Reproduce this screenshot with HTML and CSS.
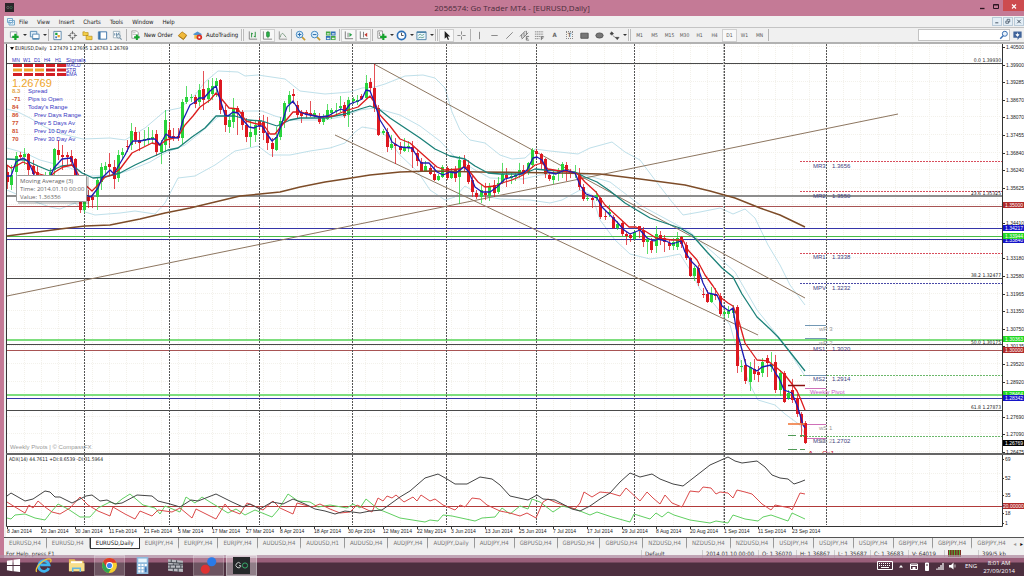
FILE: index.html
```html
<!DOCTYPE html>
<html lang="en">
<head>
<meta charset="utf-8">
<title>2056574: Go Trader MT4 - [EURUSD,Daily]</title>
<link rel="stylesheet" href="styles.css">
</head>
<body>
<header class="titlebar">
  <svg class="app-icon" viewBox="0 0 10 10" aria-hidden="true"><rect width="10" height="10" fill="#2b2529"/><circle cx="3.2" cy="5" r="1.3" fill="none" stroke="#777" stroke-width=".7"/><circle cx="6.8" cy="5" r="1.3" fill="none" stroke="#3c7a55" stroke-width=".7"/></svg>
  <h1 class="title">2056574: Go Trader MT4 - [EURUSD,Daily]</h1>
  <div class="win-controls">
    <button class="win-btn" aria-label="Minimize"><svg viewBox="0 0 10 10"><path d="M3 7.5h4.500" stroke="#2c1622" stroke-width="1.300"/></svg></button>
    <button class="win-btn" aria-label="Maximize"><svg viewBox="0 0 10 10"><path d="M2.500 3.500h5v4h-5zM2.500 4h5" fill="none" stroke="#2c1622"/></svg></button>
    <button class="win-btn win-close" aria-label="Close"><svg viewBox="0 0 10 10"><path d="M3 3.500l4 4M7 3.500l-4 4" stroke="#fff" stroke-width="1.100"/></svg></button>
  </div>
</header>

<main class="app">
  <nav class="menubar" aria-label="Menu">
    <svg class="menu-logo" viewBox="0 0 10 10" aria-hidden="true"><path d="M1.500 1.500h5v4h-5zM3 3.500h5.500v4.500h-5.500z" fill="#eef6fb" stroke="#6aa2c8" stroke-width=".9"/><path d="M4 7l1.200-1.500 1 1L8 4.800" fill="none" stroke="#6aa2c8" stroke-width=".7"/></svg>
    <button>File</button><button>View</button><button>Insert</button><button>Charts</button><button>Tools</button><button>Window</button><button>Help</button>
    <div class="child-controls">
      <button aria-label="Minimize chart"><svg viewBox="0 0 8 8"><path d="M2 5.500h3.500" stroke="#345"/></svg></button>
      <button aria-label="Restore chart"><svg viewBox="0 0 8 8"><path d="M1.500 3.500h3v2.500h-3zM3 3V1.500h3V4.500h-1.200" fill="none" stroke="#345" stroke-width=".8"/></svg></button>
      <button aria-label="Close chart"><svg viewBox="0 0 8 8"><path d="M2 2l4 4M6 2l-4 4" stroke="#345"/></svg></button>
    </div>
  </nav>

  <div class="toolbar" role="toolbar" aria-label="Tools">
    <button class="tool drop" aria-label="New chart"><svg viewBox="0 0 12 12"><path d="M1.500 2h7v6h-7z" fill="#fff" stroke="#78899a" stroke-width=".8"/><path d="M7 4v7M3.500 7.500h7" stroke="#14a32c" stroke-width="2.500"/></svg></button>
    <button class="tool drop" aria-label="Profiles"><svg viewBox="0 0 12 12"><path d="M1.500 1.500h7v6h-7z" fill="#dcecf7" stroke="#5789b2"/><path d="M4 4.500h7V10h-7z" fill="#fff" stroke="#5789b2"/><path d="M4 9.500h7" stroke="#5789b2" stroke-width="1.500"/></svg></button>
    <span class="sep"></span>
    <button class="tool" aria-label="Market Watch"><svg viewBox="0 0 12 12"><path d="M2 1.500h8v9H2z" fill="#fff" stroke="#5b86a8"/><path d="M3.500 3h2.500v2.500H3.500z" fill="#15a33b"/><path d="M6 5.500h2.500V8H6z" fill="#e5a32a"/><path d="M3.500 7h2v2h-2z" fill="#3b77c4"/></svg></button>
    <button class="tool" aria-label="Data Window"><svg viewBox="0 0 12 12"><circle cx="6" cy="6" r="3" fill="none" stroke="#555" stroke-width=".8"/><path d="M6 1v3.500M6 7.500V11M1 6h3.500M7.500 6H11" stroke="#555" stroke-width=".8"/></svg></button>
    <button class="tool" aria-label="Navigator"><svg viewBox="0 0 12 12"><path d="M1 2h2l.7.8h3V6H1zM4.500 6h2l.7.8h3.800v3.700H4.500z" fill="#f4cf48" stroke="#b58a17" stroke-width=".7"/></svg></button>
    <button class="tool" aria-label="Terminal"><svg viewBox="0 0 12 12"><path d="M1.500 2h9v8h-9z" fill="#fff" stroke="#3a73a8"/><path d="M3 2v8" stroke="#3a73a8" stroke-width="1.800"/></svg></button>
    <button class="tool" aria-label="Strategy Tester"><svg viewBox="0 0 12 12"><path d="M1.500 1.500h7v7h-7z" fill="#fff" stroke="#8ba0ad" stroke-width=".8"/><path d="M3 6V3.500M5 7V3M7 5V3" stroke="#5580a0"/><circle cx="7" cy="6.800" r="2" fill="#dceaf2" stroke="#7893a5"/><path d="M8.500 8.500l2 2" stroke="#7893a5" stroke-width="1.200"/></svg></button>
    <span class="sep"></span>
    <button class="tool wide new-order"><svg viewBox="0 0 12 12"><path d="M2 1h5l2 2v6H2z" fill="#fff" stroke="#888" stroke-width=".8"/><path d="M3 3h3M3 5h4" stroke="#999" stroke-width=".7"/><path d="M7.500 5v6M4.500 8h6" stroke="#14a32c" stroke-width="2.200"/></svg>New Order</button>
    <button class="tool" aria-label="MetaEditor"><svg viewBox="0 0 12 12"><path d="M1.500 6L5.500 2l5 3.500L7 10z" fill="#f0b93a" stroke="#a8750f" stroke-width=".8"/><path d="M1.500 6.500L7 10.500 10.500 6" fill="none" stroke="#a8750f"/></svg></button>
    <button class="tool wide autotrading"><svg viewBox="0 0 12 12"><path d="M1 4.500L6 1.500l5 3-5 2.500z" fill="#4f94cf"/><path d="M2.500 5.500h6v4h-6z" fill="#edc04e"/><circle cx="8" cy="8" r="3" fill="#d92a20"/><path d="M7 7h2v2H7z" fill="#fff"/></svg>AutoTrading</button>
    <span class="sep double"></span>
    <button class="tool" aria-label="Bar chart"><svg viewBox="0 0 12 12"><path d="M2.500 1.500V10H11" fill="none" stroke="#666" stroke-width=".8"/><path d="M5 3v5M5 4h1.500M9 2v6M7.500 7H9" stroke="#24913a"/></svg></button>
    <button class="tool pressed" aria-label="Candlesticks"><svg viewBox="0 0 12 12"><path d="M1.500 1.500V10H11" fill="none" stroke="#666" stroke-width=".8"/><path d="M6.500 1v8" stroke="#24913a"/><path d="M5 2.500h3V7H5z" fill="#29b64a" stroke="#147a2b" stroke-width=".7"/></svg></button>
    <button class="tool" aria-label="Line chart"><svg viewBox="0 0 12 12"><path d="M2.500 1.500V10H11" fill="none" stroke="#777" stroke-width=".8"/><path d="M3.500 8c1-5 3-5 4-3l2.500 3" fill="none" stroke="#6b8f72" stroke-width=".9"/></svg></button>
    <span class="sep"></span>
    <button class="tool" aria-label="Zoom in"><svg viewBox="0 0 12 12"><path d="M7.500 7.500l3.500 3.500" stroke="#c79a31" stroke-width="1.800"/><circle cx="5" cy="5" r="3.600" fill="#dff0fb" stroke="#3a82bd"/><path d="M5 3v4M3 5h4" stroke="#2a6cab" stroke-width="1.100"/></svg></button>
    <button class="tool" aria-label="Zoom out"><svg viewBox="0 0 12 12"><path d="M7.500 7.500l3.500 3.500" stroke="#c79a31" stroke-width="1.800"/><circle cx="5" cy="5" r="3.600" fill="#dff0fb" stroke="#3a82bd"/><path d="M3 5h4" stroke="#2a6cab" stroke-width="1.100"/></svg></button>
    <button class="tool" aria-label="Tile windows"><svg viewBox="0 0 12 12"><path d="M1 1.500h5v4.500H1zM6.500 6.500h5V11h-5z" fill="#41a63f"/><path d="M6.500 1.500h5v4.500h-5zM1 6.500h5V11H1z" fill="#2d6fb9"/><path d="M2 3.500h3v1.500H2zM7.500 3.500h3v1.500h-3zM2 8.500h3V10H2zM7.500 8.500h3V10h-3z" fill="#e4f0e6"/></svg></button>
    <span class="sep"></span>
    <button class="tool pressed" aria-label="Auto scroll"><svg viewBox="0 0 12 12"><path d="M2.500 1.500V9.500H11" fill="none" stroke="#555" stroke-width=".8"/><path d="M5.500 3v5" stroke="#555" stroke-width=".8"/><path d="M7 3l3 2.300L7 7.500z" fill="#29a047"/></svg></button>
    <button class="tool pressed" aria-label="Chart shift"><svg viewBox="0 0 12 12"><path d="M2.500 1.500V9.500H11" fill="none" stroke="#555" stroke-width=".8"/><path d="M6 2v6" stroke="#555" stroke-width=".8"/><path d="M10 3L7 5.300l3 2.200z" fill="#c4362d"/></svg></button>
    <span class="sep"></span>
    <button class="tool drop" aria-label="Indicators"><svg viewBox="0 0 12 12"><path d="M2 1h5v8H2z" fill="#fff" stroke="#777" stroke-width=".8"/><path d="M4 2.500c-1 3 1 1 0 4" fill="none" stroke="#333" stroke-width=".7"/><path d="M8 4v7M4.500 7.500h7" stroke="#14a32c" stroke-width="2.300"/></svg></button>
    <button class="tool drop" aria-label="Periods"><svg viewBox="0 0 12 12"><circle cx="6" cy="6" r="4.500" fill="#fff" stroke="#2c6fb7" stroke-width="1.800"/><path d="M6 3v3h2.300" fill="none" stroke="#333" stroke-width=".9"/></svg></button>
    <button class="tool drop" aria-label="Templates"><svg viewBox="0 0 12 12"><path d="M1 2h10v8.500H1z" fill="#eef7fc" stroke="#4d83a8"/><path d="M1 2.500h10" stroke="#4d83a8" stroke-width="1.500"/><path d="M2.500 6l2-1.500L6.500 6 9 4.500M2.500 9l2-1.200 2 .7L9 7.500" fill="none" stroke="#46917a" stroke-width=".8"/></svg></button>
    <span class="sep double"></span>
    <button class="tool pressed" aria-label="Cursor"><svg viewBox="0 0 12 12"><path d="M4 1v8.500l2-2 1.500 3.500 1.300-.6L7.300 7H10z" fill="#222"/></svg></button>
    <button class="tool" aria-label="Crosshair"><svg viewBox="0 0 12 12"><path d="M6 1.500v3.500M6 7v3.500M1.500 6H5M7 6h3.500" stroke="#666" stroke-width=".8"/></svg></button>
    <span class="sep"></span>
    <button class="tool" aria-label="Vertical line"><svg viewBox="0 0 12 12"><path d="M6 2v8" stroke="#666" stroke-width=".8"/></svg></button>
    <button class="tool" aria-label="Horizontal line"><svg viewBox="0 0 12 12"><path d="M2.500 6h7" stroke="#666" stroke-width=".8"/></svg></button>
    <button class="tool" aria-label="Trendline"><svg viewBox="0 0 12 12"><path d="M2.500 9.500l7-7" stroke="#666" stroke-width=".8"/></svg></button>
    <button class="tool" aria-label="Channel"><svg viewBox="0 0 12 12"><path d="M1 7l6-6M3 10l7-7M3 5v4M5.500 3v4M8 1v4" stroke="#555" stroke-width=".8"/><path d="M8 7h3M8 9h2M8 7v4h3" fill="none" stroke="#555" stroke-width=".8"/></svg></button>
    <button class="tool" aria-label="Fibonacci"><svg viewBox="0 0 12 12"><path d="M1 2h9M1 4.500h9M1 7h9M1 9.500h5" stroke="#666" stroke-width=".8" stroke-dasharray="1.500 .5"/><path d="M8 11V7.500h3M8 9h2" fill="none" stroke="#555" stroke-width=".8"/></svg></button>
    <button class="tool glyph">A</button>
    <button class="tool glyph"><span class="boxed">T</span></button>
    <button class="tool" aria-label="Rectangle"><svg viewBox="0 0 12 12"><path d="M2 3.500h8v5.500H2z" fill="#777" stroke="#555"/></svg></button>
    <button class="tool" aria-label="Ellipse"><svg viewBox="0 0 12 12"><ellipse cx="6" cy="6" rx="4" ry="2.800" fill="#777" stroke="#555"/></svg></button>
    <button class="tool drop" aria-label="Arrows"><svg viewBox="0 0 12 12"><path d="M1 4l2-2 2 2-2 1.500zM7 8h4L9 10.500zM4 6l4 3" fill="#444" stroke="#444" stroke-width=".6"/></svg></button>
    <span class="sep double"></span>
    <button class="tool period">M1</button><button class="tool period">M5</button><button class="tool period">M15</button><button class="tool period">M30</button><button class="tool period">H1</button><button class="tool period">H4</button><button class="tool period pressed">D1</button><button class="tool period">W1</button><button class="tool period">MN</button>
    <span class="sep"></span>
    <div class="search">
      <input type="text" aria-label="Search">
      <svg viewBox="0 0 12 12" aria-hidden="true"><circle cx="7" cy="4.500" r="3" fill="#e9f2fb" stroke="#3a6fb2" stroke-width="1.200"/><path d="M5 7l-3.500 3.500" stroke="#3a6fb2" stroke-width="1.800"/></svg>
    </div>
    <button class="chat" aria-label="Messages"><svg viewBox="0 0 12 12"><path d="M1.500 1.500h9v7H8L6 11V8.500H1.500z" fill="#41649a"/><path d="M6 3v2.500M4.300 5h3.400L6 7z" stroke="#fff" stroke-width=".8" fill="#fff"/></svg></button>
  </div>

  <svg class="chart" viewBox="4 42 1020 495" role="img" aria-label="EURUSD daily chart">
    <defs><clipPath id="plotClip"><path d="M7 45h995v408H7z"/></clipPath></defs>
    <path d="M4 42h1020v2H4z" fill="#b2b2b2"/>
    <path d="M6 44h1018v493H6z" fill="#fff"/>
    <g id="grid" class="grid"></g>
    <g class="bands">
      <polyline points="7,109 18,112 30,118 45,127 62,134 83,139 110,138 125,140 145,128 165,111 180,108 195,95 205,82 218,71 238,72 245,76 258,75 285,79 300,91 325,94 350,92 362,88 375,87 385,84 405,76 423,75 435,78 445,88 452,112 460,130 470,140 485,143 500,155 512,159 525,158 535,149 550,151 578,154 590,148 612,142 625,152 640,160 655,180 672,202 683,215 700,212 720,208 733,214 745,209 755,218 768,245 780,265 790,285 805,305"/>
      <polyline points="7,148 25,153 40,160 70,168 90,176 115,175 130,170 150,162 165,153 185,145 200,133 218,117 245,111 262,111 275,116 290,120 325,120 345,116 360,110 375,108 400,115 420,126 440,141 455,157 475,170 490,178 523,179 540,175 575,172 610,182 640,205 690,232 735,272 757,310 785,345 805,376"/>
      <polyline points="7,190 30,200 50,207 60,209 75,203 85,212 95,215 120,213 135,211 155,214 165,203 178,178 195,176 215,165 235,151 245,149 258,146 270,155 290,155 310,151 330,148 345,143 355,132 362,127 375,129 385,135 400,155 418,172 430,190 445,200 455,197 465,186 480,195 500,199 530,200 550,203 562,200 580,190 592,195 600,220 615,240 630,254 650,259 665,257 680,254 690,270 700,289 715,305 730,325 740,360 750,385 758,400 775,405 785,414 800,425 805,435"/>
    </g>
    <g class="levels">
      <path class="black" d="M7 63.500H1002M7 278.500H1002M7 344.500H1002M7 410.500H1002"/>
      <path class="gray" d="M7 196H1002"/>
      <path class="brown" d="M7 206.500H1002M7 350.500H1002"/>
      <path class="blue" d="M7 228.500H1002M7 239.500H1002M7 398.500H1002"/>
      <path class="green" d="M7 236.500H1002"/>
      <path class="green pale" d="M7 340H1002M7 395H1002"/>
      <path class="red-dash" d="M800 161.500H1002M800 191.500H1002M800 253.500H1002"/>
      <path class="blue-dash" d="M800 283.500H1002"/>
      <path class="green-dash" d="M800 375.500H1002M800 436.500H1002"/>
      <path class="week" d="M805 325.500h21M805 338.500h21M805 375.500h21"/>
      <path class="week-pink" d="M805 388.500h21M805 424.500h21M805 438.500h21"/>
    </g>
    <path class="months" d="M84.500 44V525M169.500 44V525M259.500 44V525M352.500 44V525M446.500 44V525M536.500 44V525M634.500 44V525M724.500 44V525M826.500 44V525"/>
    <path class="months soft" d="M723.500 44V525"/>
    <path class="trend" d="M374 64L805 298M335 135L758 335M7 296L898 114"/>
    <g id="candles"></g>
    <polyline class="ma slow" points="7,236 30,233 60,229 85,226 110,225 140,219 165,213 190,208 215,202 240,196 260,194 280,192 300,187 325,182 345,179 370,175 400,172 430,171 480,172 560,173 600,174 640,179 685,185 710,191 735,198 760,208 780,215 805,227"/>
    <polyline class="ma teal" points="7,159 25,160 38,166 50,171 62,166 72,165 82,173 93,178 105,177 120,173 135,165 150,158 168,150 178,148 192,137 205,128 216,116 235,116 248,120 262,121 277,126 290,120 300,118 325,118 345,114 360,109 370,106 380,110 390,118 405,128 420,138 435,149 450,156 465,159 475,166 488,173 500,174 523,174 535,169 545,170 575,172 585,177 597,182 610,191 625,203 650,218 680,228 692,235 707,252 722,268 733,277 742,294 757,317 770,329 778,337 790,352 805,371"/>
    <polyline class="ma red" points="7,165 11,168 16,166 23,162 32,166 36,173 50,177 55,172 63,167 72,165 76,170 82,182 92,191 98,185 105,177 112,175 120,169 132,153 140,149 152,143 160,145 166,140 178,137 185,125 193,116 200,107 210,100 216,93 220,97 229,108 238,109 246,121 257,124 263,124 270,134 275,134 283,124 293,112 300,112 320,117 333,116 345,111 358,107 370,96 375,103 380,115 390,126 400,139 410,143 420,152 429,160 437,167 445,170 460,169 465,166 470,172 478,182 485,187 495,186 505,182 512,180 523,175 535,165 542,163 548,169 560,171 572,172 578,174 585,182 596,192 605,205 617,216 629,227 636,227 645,231 656,238 672,240 683,240 688,250 697,260 705,275 713,286 720,297 728,303 733,306 738,318 745,343 757,360 768,361 777,368 785,375 792,384 797,391 801,400 805,410"/>
    <polyline class="ma blue" points="7,176 11,176 16,162 23,158 28,161 33,172 38,186 46,186 54,168 62,159 71,158 76,172 83,194 91,197 98,188 102,178 110,170 114,174 119,165 125,155 130,145 133,141 140,141 150,139 155,139 160,145 166,134 170,137 178,138 183,120 190,105 195,102 199,98 204,98 210,91 216,86 220,99 225,115 228,116 233,112 238,113 243,120 249,127 254,128 258,126 262,126 267,134 272,141 277,137 282,123 287,107 293,101 300,112 305,114 320,117 328,116 335,112 341,109 345,111 350,104 358,101 362,99 366,90 370,91 374,101 380,120 388,133 392,142 400,147 412,148 418,158 421,163 429,163 437,172 443,175 450,172 456,173 464,167 469,172 475,187 482,192 490,192 497,187 505,179 512,177 523,173 527,170 533,158 537,157 542,160 548,172 556,174 565,170 575,173 580,185 586,194 597,198 602,207 612,217 617,222 624,230 630,234 640,230 647,238 654,241 658,239 666,241 672,244 681,241 685,252 692,262 698,268 703,283 708,293 717,295 722,306 729,311 733,308 736,328 742,350 746,365 757,371 762,367 771,365 776,374 779,378 784,390 792,393 798,408 803,425 805,428"/>
    <path d="M788 385.500h17" stroke="#8c1010" stroke-width="1.500"/>
    <path d="M788 424h17" stroke="#ef7030" stroke-width="1.500"/>
    <path d="M788 435.500h8M800 435.500h5M788 449.500h9M800 449.500h5" stroke="#4f9a55" stroke-width="1"/>

    <g id="pivotLabels" class="pivots">
      <text x="813" y="168">MR3</text><text x="832" y="168">1.3656</text>
      <text x="813" y="198">MR2</text><text x="832" y="198">1.3550</text>
      <text x="813" y="259">MR1</text><text x="832" y="259">1.3338</text>
      <text x="813" y="290">MPV</text><text x="832" y="290">1.3232</text>
      <text x="813" y="351">MS1</text><text x="832" y="351">1.3020</text>
      <text x="813" y="381">MS2</text><text x="832" y="381">1.2914</text>
      <text x="813" y="443">MS3</text><text x="832" y="443">1.2702</text>
      <g class="faint"><text x="819" y="331">wR 3</text><text x="819" y="345">wR 2</text><text x="819" y="430">wS 1</text><text x="819" y="443">wS 2</text></g>
      <text class="pink" x="810" y="394">Weekly Pivot</text>
    </g>
    <g class="alert" clip-path="url(#plotClip)"><text x="808" y="456">A</text><text x="822" y="456">Ω:1</text></g>

    <g class="small">
      <path d="M10 47h4l-2 3z" fill="#111"/>
      <text x="15" y="50">EURUSD,Daily&#160; 1.27479 1.27605 1.26763 1.26769</text>
      <text x="9" y="461">ADX(14) 44.7611 +DI:8.6539 -DI:31.5964</text>
      <g class="end"><text x="1001" y="62">0.0 1.39930</text><text x="1001" y="195">23.6 1.35325</text><text x="1001" y="277">38.2 1.32477</text><text x="1001" y="344">50.0 1.30175</text><text x="1001" y="409">61.8 1.27873</text></g>
    </g>
    <text class="watermark" x="10" y="449">Weekly Pivots | © CompassFX</text>

    <g class="signals">
      <text x="12" y="62">MN</text><text x="23" y="62">W1</text><text x="34" y="62">D1</text><text x="44" y="62">H4</text><text x="55" y="62">H1</text><text class="six" x="66" y="62">Signals</text>
      <text x="66" y="67">MACD</text><text x="66" y="72">STR</text><text x="66" y="76">EMA</text>
      <path d="M13 65.500h53M46 70h20M13 74.500h53" class="bar hot"/>
      <path d="M13 70h31" class="bar warm"/>
    </g>
    <text class="bid" x="12" y="87">1.26769</text>
    <g class="stats">
      <text class="v first" x="12" y="93">8.3</text><text x="28" y="93">Spread</text>
      <text class="v" x="12" y="101">-71</text><text x="28" y="101">Pips to Open</text>
      <text class="v" x="12" y="109">84</text><text x="28" y="109">Today's Range</text>
      <text class="v" x="12" y="117">86</text><text x="34" y="117">Prev Days Range</text>
      <text class="v" x="12" y="125">77</text><text x="34" y="125">Prev 5 Days Av</text>
      <text class="v" x="12" y="133">81</text><text x="34" y="133">Prev 10 Day Av</text>
      <text class="v" x="12" y="141">70</text><text x="34" y="141">Prev 30 Day Av</text>
    </g>

    <g class="adx">
      <path d="M7 506.500H1002" stroke="#b03a3a"/>
      <polyline class="plus" points="7,518 11,519 15,515 25,514 35,518 45,520 52,511 58,504 68,509 80,517 90,517 98,508 110,502 116,504 122,499 130,494 143,505 155,508 160,514 165,506 180,512 186,497 195,503 202,497 210,502 220,508 228,513 236,509 245,515 255,510 272,517 278,510 288,494 298,501 310,502 318,507 330,505 347,508 353,504 360,508 366,499 378,509 388,513 400,518 425,522 430,520 438,521 443,515 452,516 475,521 482,518 495,517 502,508 510,514 520,506 528,509 532,499 540,502 553,512 562,506 575,509 590,515 597,512 612,517 630,522 634,514 650,519 656,513 662,517 668,512 674,515 690,520 710,523 716,521 728,523 733,515 745,519 758,521 763,517 771,515 788,521 792,513 805,519"/>
      <polyline class="minus" points="7,502 15,507 25,513 29,505 33,508 38,501 45,507 52,512 60,514 70,508 80,497 88,505 98,511 110,516 113,507 125,514 135,519 140,511 152,516 158,510 172,512 180,508 192,518 196,509 216,519 225,504 230,510 240,514 247,503 252,505 263,510 273,501 280,508 293,514 297,503 312,507 320,504 330,509 340,513 350,512 357,505 372,512 378,498 383,501 387,496 392,498 396,495 404,502 413,497 417,501 421,495 430,501 435,499 443,505 455,510 460,505 465,507 472,498 480,499 487,505 500,511 510,513 520,516 527,513 536,518 543,502 548,499 557,503 575,509 580,503 584,492 592,497 600,492 610,493 620,496 626,488 640,501 647,492 653,498 660,504 665,495 672,503 682,507 690,491 699,492 703,487 711,488 716,494 720,492 728,493 733,498 737,490 745,492 752,494 762,504 771,510 775,505 790,508 792,510 800,493 805,494"/>
      <polyline class="main" points="7,496 11,493 25,501 33,499 45,491 50,492 55,497 60,497 72,503 78,500 86,496 92,495 100,501 107,500 115,504 122,503 137,495 152,496 158,501 170,504 180,507 191,500 198,501 216,494 222,497 232,502 243,507 250,504 260,509 272,502 283,504 293,499 305,504 315,509 325,511 335,514 345,511 360,513 370,511 382,510 400,497 410,491 425,478 438,474 447,479 455,484 467,484 480,477 492,479 500,485 510,496 528,500 537,495 543,499 555,500 572,509 580,511 590,506 600,499 610,493 620,482 630,473 640,477 652,474 660,479 673,484 683,486 692,479 710,465 728,457 735,461 742,463 757,461 765,467 772,475 780,478 788,479 794,484 800,482 805,480"/>
    </g>
    <path d="M6.500 44V526.500H1002.500V44" fill="none" stroke="#333"/>
    <path d="M6 454H1024" stroke="#666" stroke-width="2"/>
    <g id="axis" class="axis"></g>
    <g id="dates" class="axis"></g>

    <g class="hint">
      <rect x="18" y="177" width="71" height="27" fill="#000" opacity=".18"/>
      <rect x="16.500" y="175.500" width="70" height="26" rx="1" fill="#fff" stroke="#999"/>
      <text x="20" y="183">Moving Average (3)</text>
      <text x="20" y="191">Time: 2014.01.10 00:00</text>
      <text x="20" y="199">Value: 1.36356</text>
    </g>
  </svg>

  <nav class="tabs" aria-label="Charts">
    <button>EURUSD,H4</button><button>EURUSD,H4</button><button class="active">EURUSD,Daily</button><button>EURJPY,H4</button><button>EURJPY,H4</button><button>EURJPY,H4</button><button>AUDUSD,H4</button><button>AUDUSD,H1</button><button>AUDUSD,H4</button><button>AUDJPY,H4</button><button>AUDJPY,Daily</button><button>AUDJPY,H4</button><button>GBPUSD,H4</button><button>GBPUSD,H4</button><button>GBPUSD,H4</button><button>NZDUSD,H4</button><button>NZDUSD,H4</button><button>NZDUSD,H4</button><button>USDJPY,H4</button><button>USDJPY,H4</button><button>USDJPY,H4</button><button>GBPJPY,H4</button><button>GBPJPY,H4</button><button>GBPJPY,H4</button>
    <span class="tab-scroll"><button class="dim" aria-label="Scroll left">◂</button><button aria-label="Scroll right">▸</button></span>
  </nav>

  <div class="statusbar">
    <span class="help">For Help, press F1</span>
    <span class="w60">Default</span><span class="w55">2014.01.10 00:00</span><span class="w38">O: 1.36070</span><span class="w38">H: 1.36867</span><span class="w36">L: 1.35687</span><span class="w38">C: 1.36683</span><span class="w36">V: 64019</span>
    <span class="meter"><svg viewBox="0 0 13 7"><path d="M0 0h13v7H0z" fill="#7c2f22"/><path d="M1.500 0v7M4 0v7M6.500 0v7M9 0v7M11.500 0v7" stroke="#4fae3c"/></svg></span>
    <span class="traffic">399/5 kb</span>
  </div>
</main>

<footer class="taskbar">
  <button class="start" aria-label="Start"><svg viewBox="0 0 16 16"><path d="M1 3l6-1v5.500H1zM8 1.800L15 1v6.500H8zM1 8.500h6V14l-6-1zM8 8.500h7V15l-7-.9z" fill="#fff"/></svg></button>
  <button class="task" aria-label="Internet Explorer"><svg viewBox="0 0 16 16"><path d="M13 10.500a5 5 0 1 1 .3-3H5" fill="none" stroke="#3fb4ee" stroke-width="2.600"/><path d="M1.500 14C-.5 10 9 .5 14.500 2c1 .5.500 2 0 3" fill="none" stroke="#f2c63a" stroke-width="1.200"/></svg></button>
  <button class="task" aria-label="File Explorer"><svg viewBox="0 0 18 16"><path d="M1 1.500h6l1 1.500h8.500v11H1z" fill="#e9bf54"/><path d="M3 3.500h12v4H3z" fill="#fff"/><path d="M1 5.500h16.500V14H1z" fill="#f8df8b"/><path d="M5 15v-4h8v4" fill="none" stroke="#65b5df" stroke-width="1.600"/></svg></button>
  <button class="task open" aria-label="Chrome"><svg viewBox="0 0 16 16"><circle cx="8" cy="8" r="7" fill="#f6cf2f"/><path d="M2 4.500A7 7 0 0 1 14.500 5.300H8z" fill="#dd3a2c"/><path d="M2 4.500A7 7 0 0 0 7 15l3.500-5.500L8 8z" fill="#32a551"/><path d="M2 4.500L5 9.500 8 5.300z" fill="#dd3a2c"/><circle cx="8" cy="8" r="3.200" fill="#fff"/><circle cx="8" cy="8" r="2.400" fill="#3c7ff0"/></svg></button>
  <button class="task" aria-label="Calculator"><svg viewBox="0 0 16 16"><path d="M2.500 0h11v16h-11z" fill="#8db9dc"/><path d="M4 1.500h8v3.500H4z" fill="#e8f5fc"/><path d="M4 7.500h8M4 10.500h8M4 13.500h8" stroke="#fff" stroke-width="2" stroke-dasharray="2 1"/><path d="M10 9.500h2v5h-2z" fill="#3a75b5"/></svg></button>
  <button class="task" aria-label="Bricks"><svg viewBox="0 0 16 16"><path d="M1 2l14 1.500V14L1 13z" fill="#b9bbc0"/><path d="M1 5l14 1M1 7.500h14M1 10.500h14M4 2v3M9 3v2.500M6 5v2.500M12 6v2M3 8v3M8 8v3M13 8v3M6 11v3M10.500 11v3" stroke="#4b4f56"/></svg></button>
  <button class="task open" aria-label="Red and blue"><svg viewBox="0 0 16 16"><circle cx="11" cy="4.500" r="4.300" fill="#2a7be8"/><circle cx="5" cy="11.500" r="4.300" fill="#df3232"/></svg></button>
  <button class="task current" aria-label="Go Trader"><svg viewBox="0 0 17 17"><path d="M0 0h17v17H0z" fill="#25282a"/><path d="M7.500 6.500a2.600 2.600 0 1 0 .3 3v-.8H6" fill="none" stroke="#c9cfcc"/><circle cx="12" cy="8.500" r="2.600" fill="none" stroke="#36ab6a"/></svg></button>
  <div class="tray">
    <svg class="kbd" viewBox="0 0 16 9"><path d="M.5.500h15v8H.5z" fill="none" stroke="#fff"/><path d="M2 2.500h12M2 4.500h12" stroke="#fff" stroke-dasharray="1 1"/><path d="M4 6.500h8" stroke="#fff"/></svg>
    <svg class="ico" viewBox="0 0 10 10"><path d="M3 6.500l2-2.500 2 2.500z" fill="#fff"/></svg>
    <svg class="ico" viewBox="0 0 10 10"><path d="M1.500 3h7v5.500h-7z" fill="none" stroke="#fff"/><path d="M3.500 6h3v3h-3z" fill="#fff"/><path d="M1.500 4.500h7" stroke="#fff"/></svg>
    <svg class="ico" viewBox="0 0 10 10"><path d="M3.500 2h3v7.500h-3z" fill="#fff" stroke="#fff"/><path d="M4.500 3h1v2h-1z" fill="#4d2f3f"/></svg>
    <svg class="ico" viewBox="0 0 10 10"><path d="M2 9V7.500M4 9V6M6 9V4M8 9V2" stroke="#fff" stroke-width="1.200"/></svg>
    <svg class="ico" viewBox="0 0 10 10"><path d="M1 4h2l2.500-2.500v7L3 6.500H1z" fill="#fff"/><path d="M7 3.500v3" stroke="#ccc"/></svg>
    <span class="lang">ENG</span>
    <time class="clock" datetime="2014-09-27T08:01"><span>8:01 AM</span><span>27/09/2014</span></time>
  </div>
</footer>
<script src="chart.js"></script>
</body>
</html>
```

FILE: styles.css
```css
* { box-sizing: border-box; }
html, body { margin: 0; }
body {
  min-height: 100vh;
  display: flex;
  flex-direction: column;
  overflow: hidden;
  background: #c47a96;
  color: #222;
  font-family: "DejaVu Sans Condensed", "DejaVu Sans", sans-serif;
  font-size: 6px;
}
button {
  margin: 0;
  padding: 0;
  border: 0;
  background: none;
  color: inherit;
  font: inherit;
  line-height: 1;
}
svg { display: block; }

.titlebar { display: grid; grid-template-columns: 1fr auto 1fr; height: 16px; background: #c47a96; }
.app-icon { width: 9px; height: 9px; margin: 3px 0 0 5px; }
.title { margin: 0; font: 400 8px/16px "Open Sans", sans-serif; color: #4a2c3a; }
.win-controls { display: flex; justify-content: flex-end; }
.win-btn { width: 14px; height: 11px; display: grid; place-items: center; }
.win-btn svg { width: 10px; height: 10px; }
.win-close { width: 21px; background: #cd4b4f; }

.app { display: flex; flex-direction: column; margin-left: 4px; background: #f0f0f0; }
.menubar { display: flex; align-items: center; height: 11px; padding-left: 2px; }
.menubar > button { margin-right: 9px; }
.menu-logo { width: 10px; height: 10px; margin-right: 3px; }
.child-controls { display: flex; gap: 1px; margin-left: auto; }
.child-controls button { width: 10px; height: 9px; border: 1px solid #b9cad8; background: #e4eef6; }
.child-controls svg { width: 8px; height: 7px; }

.toolbar { display: flex; align-items: center; height: 15px; padding-left: 3px; border-top: 1px solid #c4c4c4; }
.tool { flex: none; display: flex; align-items: center; justify-content: center; width: 15px; height: 13px; }
.tool svg { flex: none; width: 11px; height: 11px; }
.drop { width: 20px; justify-content: flex-start; padding-left: 2px; gap: 3px; }
.drop::after { content: ""; border: 2px solid transparent; border-top-color: #333; border-bottom: 0; }
.wide { justify-content: flex-start; gap: 3px; padding-left: 2px; color: #111; }
.new-order { width: 47px; }
.autotrading { width: 50px; }
.pressed { background: #f8f8f8; border: 1px solid #d0d0d0; }
.sep { flex: none; width: 1px; height: 12px; margin: 0 1px; background: #b4b4b4; }
.double { width: 3px; border: 1px solid #bcbcbc; border-width: 0 1px; background: #f7f7f7; }
.glyph { font-weight: 700; color: #666; }
.boxed { padding: 0 1px; border: 1px dotted #888; }
.period { font-size: 5px; color: #555; }
.search { display: flex; align-items: center; width: 92px; height: 12px; margin-left: auto; background: #fff; border: 1px solid #c3c3c3; }
.search input { flex: 1; min-width: 0; height: 10px; padding: 0; border: 0; background: none; font: inherit; }
.search svg { width: 10px; height: 10px; }
.chat { width: 14px; display: grid; place-items: center; }
.chat svg { width: 11px; height: 11px; }

.chart { width: 100%; height: auto; font-family: "Liberation Sans", sans-serif; font-size: 6px; }
.chart polyline { fill: none; }
.grid path { stroke: #f3f1eb; fill: none; stroke-width: 1; stroke-dasharray: 1 1; }
.bands polyline { stroke: #bfe0ea; stroke-width: 1; }
.levels path { fill: none; stroke-width: 1; }
.levels .black { stroke: #4a4a4a; }
.levels .gray { stroke: #8d8d8d; stroke-width: 2; }
.levels .brown { stroke: #a85454; }
.levels .blue { stroke: #3535a8; }
.levels .green { stroke: #45bd45; }
.levels .pale { stroke: #7ede7e; stroke-width: 2; }
.levels .red-dash { stroke: #d84e5c; stroke-dasharray: 2 1; }
.levels .blue-dash { stroke: #4a4aa8; stroke-dasharray: 2 1; }
.levels .green-dash { stroke: #6cb86c; stroke-dasharray: 2 1; }
.levels .week { stroke: #7398b4; }
.levels .week-pink { stroke: #cf70b8; }
.months { stroke: #555; stroke-width: 1; stroke-dasharray: 2 1; fill: none; }
.months.soft { stroke: #bbb; }
.trend { stroke: #8d7660; stroke-width: 1; fill: none; }
.up { stroke: #28d43a; fill: #28d43a; }
.down { stroke: #dd1820; fill: #dd1820; }
.wick { stroke-width: 1; opacity: .75; }
.ma { stroke-width: 1.3; stroke-linejoin: round; }
.ma.slow { stroke: #7d4c28; stroke-width: 1.5; }
.ma.teal { stroke: #1a8078; }
.ma.red { stroke: #dc1c1c; }
.ma.blue { stroke: #1c1cb4; }
.pivots { fill: #3c3c7c; }
.pivots .faint { fill: #999; }
.pivots .pink { fill: #c455c4; }
.alert { fill: #c23; font-size: 8px; }
.small { font-size: 5px; font-family: "DejaVu Sans Condensed", "DejaVu Sans", sans-serif; fill: #222; }
.end { text-anchor: end; }
.watermark { fill: #999; }
.signals { font-size: 5px; fill: #3232c0; }
.signals .six { font-size: 6px; }
.bar { fill: none; stroke-width: 3; stroke-dasharray: 9 2; }
.hot { stroke: #d21f24; }
.warm { stroke: #f2a52c; }
.bid { font-size: 11px; fill: #efa52b; }
.stats { fill: #3838c4; }
.stats .v { fill: #d0512f; font-weight: 700; }
.stats .first { fill: #e5a44a; }
.adx path, .adx polyline { stroke-width: 1; fill: none; }
.adx .plus { stroke: #61cf61; }
.adx .minus { stroke: #db4a4a; }
.adx .main { stroke: #444; }
.axis { font-size: 5px; fill: #222; }
.axis path { stroke: #333; }
.axis .tag { fill: #fff; }
.hint { fill: #666; font-family: "Open Sans", sans-serif; }

.tabs { display: flex; height: 12px; overflow: hidden; border-top: 1px solid #555; color: #777; }
.tabs > button { flex: none; height: 11px; padding: 0 5px; border-right: 1px solid #999; border-bottom: 2px solid #f0f0f0; white-space: nowrap; }
.tabs .active { background: #fff; color: #111; border: 1px solid #333; border-top: 0; }
.tab-scroll { display: flex; gap: 4px; margin-left: auto; padding: 0 1px 0 3px; background: #f0f0f0; position: sticky; right: 0; color: #111; }
.tab-scroll .dim { color: #999; }

.statusbar { display: flex; align-items: flex-start; height: 10px; padding: 1px 4px 0 2px; line-height: 8px; color: #333; }
.statusbar span { flex: none; padding-left: 3px; white-space: nowrap; border-left: 1px solid #ccc; }
.statusbar .help { flex: 1; padding-left: 0; border: 0; }
.statusbar .w60 { width: 61px; }
.statusbar .w55 { width: 56px; }
.statusbar .w38 { width: 38px; }
.statusbar .w36 { width: 36px; }
.statusbar .meter { width: 34px; }
.meter svg { width: 13px; height: 7px; }
.statusbar .traffic { width: 42px; }

.taskbar {
  position: relative;
  flex: 1;
  display: flex;
  min-height: 21px;
  margin-top: -4px;
  background: linear-gradient(rgb(176 140 162 / .75) 0 3px, #9a5f7a 3px 7px, #4d2f3f 8px);
  color: #fff;
  font-family: "Open Sans", sans-serif;
}
.start { width: 27px; }
.start svg { width: 15px; height: 15px; margin: 0 6px; }
.task { display: grid; place-items: center; width: 31px; margin: 0 1px; }
.task svg { width: 17px; height: 17px; }
.open { background: rgb(255 255 255 / .18); border: 1px solid rgb(255 255 255 / .2); }
.current { background: rgb(255 255 255 / .38); border: 1px solid rgb(255 255 255 / .3); }
.tray { display: flex; align-items: center; gap: 3px; margin-left: auto; padding-right: 9px; }
.kbd { width: 16px; height: 9px; }
.ico { width: 10px; height: 10px; }
.lang { margin: 0 3px 0 4px; font-size: 6px; }
.clock { display: grid; text-align: center; font-size: 6px; line-height: 8px; padding-top: 2px; }
```

FILE: chart.js
```js
// Each candle: direction, high, body top, body bottom, low (chart units)
const candles = `r165,172,182,189 g165,175,185,190 g152,156,172,178 r152,155,157,160 g148,154,157,165 r153,154,170,175
r160,166,174,178 r166,172,180,186 g176,180,188,192 g172,178,186,190 g168,172,182,186 g148,149,170,178 r140,150,155,160
r145,155,157,170 r152,155,157,165 r150,156,162,165 r158,159,176,180 r190,200,210,213 g195,202,210,213 r190,197,201,208
r194,197,200,208 g178,180,197,210 g163,167,182,190 g162,166,170,175 r153,164,167,175 r160,167,179,189 g150,155,178,182
g148,152,155,160 r140,146,147,152 g123,131,145,150 r127,132,140,144 r132,140,143,151 g130,139,141,146 g127,138,140,145
g130,137,139,144 r130,134,152,156 g140,144,152,164 g110,120,145,152 r122,130,138,146 r128,136,138,141 r128,136,138,141
g99,102,138,144 g86,97,102,104 g94,97,98,102 r95,97,104,108 g84,90,102,106 r71,89,100,110 g80,88,99,103 g78,86,94,100
g78,81,86,97 r79,80,110,114 r105,110,125,132 g115,120,127,133 g98,108,122,128 r106,108,112,135 r110,112,125,130
r118,125,137,142 g120,132,137,147 g120,125,135,142 r118,121,126,130 r115,122,133,140 r117,133,143,150 r138,143,149,157
g127,137,150,151 g117,121,137,140 g101,103,121,128 g91,95,104,112 r89,94,96,104 r101,105,115,118 r110,113,116,123
r110,112,115,118 r101,113,115,117 g110,113,116,118 r113,116,122,124 g114,118,122,125 g104,110,119,120 g108,110,113,119
g103,110,111,116 g96,106,108,112 r102,105,116,118 g97,100,115,127 g97,99,101,104 g95,100,102,105 r94,96,99,100
g75,83,98,99 r78,82,88,92 r64,88,108,112 r105,108,135,136 g129,131,133,135 r128,132,147,152 g135,144,148,150
r138,144,146,164 r142,146,150,154 g138,147,151,152 g141,146,148,152 r141,147,152,168 r149,153,161,166 r158,162,171,172
g161,166,171,172 r165,168,174,175 r166,174,180,181 g174,176,180,181 g165,167,177,178 r166,168,178,180 g168,171,178,179
r166,170,178,182 g156,160,177,204 r155,160,168,171 r160,165,182,184 r176,180,192,197 r190,193,197,199 g185,190,197,203
r183,193,195,200 g183,186,196,201 r180,185,193,197 g177,183,192,194 g163,174,182,184 r168,175,178,187 g172,176,178,184
g172,175,177,181 g163,170,175,178 r165,170,174,184 g162,163,173,175 g148,150,165,168 r149,151,154,158 r153,154,163,170
r158,159,174,178 r172,175,179,181 g171,176,180,184 g168,171,174,181 g162,164,171,178 r162,165,171,181 r169,171,174,178
g165,172,174,178 r168,173,187,190 r184,187,199,201 g194,198,199,201 r195,198,200,208 g191,195,198,201 r197,198,217,219
r210,216,217,220 g205,212,214,217 r215,217,228,229 g221,224,228,230 r221,223,234,236 r232,234,236,245 r233,235,238,242
g230,232,239,240 r226,226,230,238 r227,230,242,247 g236,239,242,254 r238,241,250,253 g226,234,246,253 r231,235,240,245
r235,238,242,252 r240,243,246,250 g238,242,246,250 g232,238,247,250 r236,237,244,248 r242,245,258,260 r257,258,276,277
g266,268,276,281 r265,268,283,286 r288,294,295,298 r290,294,302,303 g287,294,302,303 r288,294,296,300 r293,296,314,316
g307,312,314,318 g306,311,314,318 g305,309,313,318 r305,307,366,373 g360,366,367,372 r359,365,381,384 g362,367,382,391
r359,369,374,380 r366,372,375,382 g358,362,373,377 r355,358,363,377 g352,364,367,372 r355,362,390,393 g370,373,390,396
r371,373,402,403 g390,393,398,400 r379,390,400,403 r394,398,414,417 r412,414,423,437 r421,423,443,444`.split(/\s+/);

const prices = ["1.40500", "1.39900", "1.39285", "1.38670", "1.38070", "1.37455", "1.36840", "1.36240", "1.35625", "", "1.34410", "",
  "1.33180", "1.32580", "1.31965", "1.31350", "1.30750", "1.30135", "1.29520", "1.28920", "", "1.27690", "1.27090", "1.26475"];
const dates = ["8 Jan 2014", "20 Jan 2014", "30 Jan 2014", "11 Feb 2014", "21 Feb 2014", "5 Mar 2014", "17 Mar 2014", "27 Mar 2014",
  "8 Apr 2014", "18 Apr 2014", "30 Apr 2014", "12 May 2014", "22 May 2014", "3 Jun 2014", "13 Jun 2014", "25 Jun 2014", "7 Jul 2014",
  "17 Jul 2014", "29 Jul 2014", "8 Aug 2014", "20 Aug 2014", "1 Sep 2014", "11 Sep 2014", "23 Sep 2014"];
const tags = [["1.33840", 240, "#1414c8"], ["1.35000", 205, "#b02a2a"], ["1.34217", 228, "#1414c8"], ["1.33944", 236, "#22d822"],
  ["1.30363", 339, "#22d822"], ["1.30000", 350, "#b02a2a"], ["1.28464", 394, "#22d822"], ["1.28342", 398, "#1414c8"],
  ["1.26769", 443, "#000"], ["20.00000", 506, "#b02a2a"]];

const firstX = 7, step = 4.268, dateStep = 34.14, priceStep = 17.61;
const fill = (id, html) => { document.getElementById(id).innerHTML = html; };

fill("candles", candles.map((c, i) => {
  const [high, top, bottom, low] = c.slice(1).split(",").map(Number);
  const x = Math.round(firstX + i * step);
  const cls = c[0] === "g" ? "up" : "down";
  return `<path class="${cls} wick" d="M${x + 0.5} ${high}V${low}"/><rect class="${cls}" style="stroke:none" x="${x - 1}" y="${top}" width="3" height="${Math.max(1, bottom - top)}"/>`;
}).join(""));

let grid = "";
for (let x = firstX + 17; x < 1002; x += dateStep / 2) grid += `M${Math.round(x) + 0.5} 44V526`;
prices.forEach((_, i) => { grid += `M7 ${Math.round(46 + i * priceStep) + 0.5}H1002`; });
grid += "M7 473.5H1002M7 491.5H1002";
fill("grid", `<path d="${grid}"/>`);

const tick = (x, y, label) => `<path d="M${x} ${y - 1.5}h2"/><text x="${x + 3}" y="${y}">${label}</text>`;
fill("axis",
  prices.map((p, i) => p && tick(1003, Math.round(49 + i * priceStep), p)).join("") +
  [["69", 461], ["52", 480], ["35", 497], ["18", 515], ["1", 525]].map(([t, y]) => tick(1002, y, t)).join("") +
  tags.map(([t, y, c]) => `<rect x="1003" y="${y - 3}" width="21" height="6" fill="${c}"/><text class="tag" x="${t.length > 7 ? 1003 : 1005}" y="${y + 2}">${t}</text>`).join(""));
fill("dates", dates.map((d, i) => {
  const x = Math.round(firstX + i * dateStep);
  return `<path d="M${x + 0.5} 526v3"/><text x="${x}" y="533">${d}</text>`;
}).join(""));
```
